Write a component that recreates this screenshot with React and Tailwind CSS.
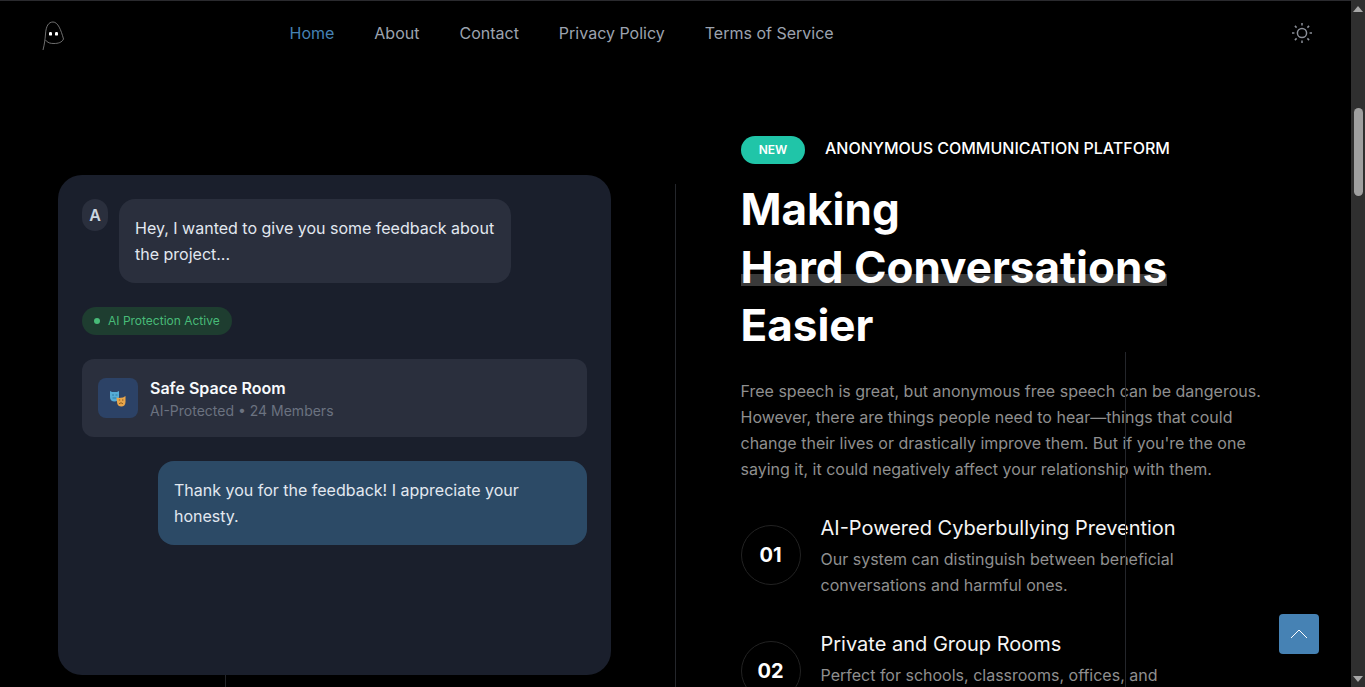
import React from 'react';

const navLinks = ['Home', 'About', 'Contact', 'Privacy Policy', 'Terms of Service'];

const features = [
  { num: '01', title: 'AI-Powered Cyberbullying Prevention', text: ['Our system can distinguish between beneficial', 'conversations and harmful ones.'] },
  { num: '02', title: 'Private and Group Rooms', text: ['Perfect for schools, classrooms, offices, and'] },
];

const GhostLogo = () => (
  <svg width="26" height="32" viewBox="0 0 26 32" fill="none">
    <path d="M2 32 C3.5 26 4 22 4.5 16 C5 8 7.5 4 12 4 C17 4 20 12 22.5 21 C21 24.5 17 25.5 13 25.5 C9.5 25.5 6.5 25 4.5 22" stroke="#8a8a8a" strokeWidth="0.8" />
    <rect x="8" y="14" width="3" height="3.6" rx="1.2" fill="#fff" />
    <rect x="14" y="14" width="3" height="3.6" rx="1.2" fill="#fff" />
  </svg>
);

const SunIcon = () => (
  <svg width="22" height="22" viewBox="0 0 22 22" fill="none" stroke="#8b8f98" strokeWidth="1.5">
    <circle cx="11" cy="11" r="4.6" />
    <path d="M11 1v2.4M11 18.6V21M1 11h2.4M18.6 11H21M3.9 3.9l1.7 1.7M16.4 16.4l1.7 1.7M3.9 18.1l1.7-1.7M16.4 5.6l1.7-1.7" />
  </svg>
);

const MasksIcon = () => (
  <svg width="18" height="18" viewBox="0 0 18 18">
    <path d="M1 2 L3 3 H8 L10 2 V8 C10 11 8 12.5 5.5 12.5 C3 12.5 1 11 1 8 Z" fill="#55acd6" />
    <path d="M3 6h2M6.5 6h2M3.5 9h4" stroke="#2f7fa8" strokeWidth="1" />
    <path d="M7.5 8.5 L9.5 9 L14 8.5 L16.5 7 V13 C16.5 16 14.5 17.5 12.5 17.5 C10 17.5 8 16 8 13 Z" fill="#e9a64a" />
    <path d="M10 15 C11 13.5 13 13.5 14 15" stroke="#8a5a1c" strokeWidth="1" fill="none" />
    <path d="M9.8 11h1.4M13 11h1.4" stroke="#8a5a1c" strokeWidth="1" />
  </svg>
);

export default function App() {
  return (
    <div className="flex h-[687px] overflow-hidden bg-black font-['Inter',sans-serif] text-white">
      <div className="relative flex-1 min-w-0 border-t border-[#2a2a2e]">
        <nav className="flex h-[64px] items-center pl-[41px] pr-[38px]">
          <div className="mr-[222.5px] mt-[2px] w-[26px]"><GhostLogo /></div>
          <div className="flex gap-10 text-base text-[#9ca3af]">
            {navLinks.map((link, i) => (
              <a key={link} className={i === 0 ? 'text-[#4682b4]' : ''}>{link}</a>
            ))}
          </div>
          <div className="ml-auto"><SunIcon /></div>
        </nav>

        <div className="flex">
          <div className="w-[676px] shrink-0 pl-[58px] pt-[110px]">
            <div className="h-[500px] w-[553px] rounded-3xl bg-[#1a1f2c] p-6">
              <div className="flex gap-[11px]">
                <div className="flex h-8 w-[26px] items-center justify-center rounded-full bg-[#2a2f3d] text-base font-semibold text-[#cbd5e0]">A</div>
                <div className="h-[84px] w-[392px] rounded-2xl bg-[#2a2f3d] p-4 leading-[26px] text-[#e2e8f0]">
                  Hey, I wanted to give you some feedback about the project...
                </div>
              </div>
              <div className="mt-6 flex h-7 w-[150px] items-center gap-2 rounded-full bg-[#1e3d30] pl-3 text-xs text-[#48bb78]">
                <span className="h-1.5 w-1.5 rounded-full bg-[#48bb78]" />
                AI Protection Active
              </div>
              <div className="mt-6 flex h-[78px] items-center gap-3 rounded-xl bg-[#2a2f3d] px-4">
                <div className="flex h-10 w-10 items-center justify-center rounded-lg bg-[#2c4266]"><MasksIcon /></div>
                <div>
                  <div className="text-base font-semibold leading-[24px] text-[#f7fafc]">Safe Space Room</div>
                  <div className="mt-px text-sm leading-[20px] text-[#6b7280]">AI-Protected • 24 Members</div>
                </div>
              </div>
              <div className="ml-[76px] mt-6 h-[84px] rounded-2xl bg-[#2c4a66] p-4 leading-[26px] text-[#e2e8f0]">
                Thank you for the feedback! I appreciate your honesty.
              </div>
            </div>
          </div>

          <div className="min-w-0 flex-1 pl-[64.5px] pt-[71px]">
            <div className="flex items-center gap-5 pl-[0.5px]">
              <span className="flex h-7 w-16 items-center justify-center rounded-full bg-[#20c5a8] text-xs font-semibold">NEW</span>
              <span className="-mt-1 text-base font-medium leading-[24px]">ANONYMOUS COMMUNICATION PLATFORM</span>
            </div>
            <h1 className="isolate mt-[16px] text-[44px] font-bold leading-[58px]">
              Making<br />
              <span className="relative">
                Hard Conversations
                <span className="absolute inset-x-0 bottom-[8px] -z-10 h-3 bg-[#3a3a3a] bg-[radial-gradient(#262626_0.6px,transparent_0.7px)] bg-[length:2px_2px]" />
              </span><br />
              Easier
            </h1>
            <p className="mt-[24px] w-[530px] text-base leading-[26px] text-[#8f8f8f]">
              Free speech is great, but anonymous free speech can be dangerous. However, there are things people need to hear—things that could change their lives or drastically improve them. But if you're the one saying it, it could negatively affect your relationship with them.
            </p>
            <div className="mt-[43px] flex flex-col gap-[43px]">
              {features.map((f) => (
                <div key={f.num} className="flex gap-5">
                  <div className="flex h-[60px] w-[60px] shrink-0 items-center justify-center rounded-full border border-[#222] text-[20px] font-bold">{f.num}</div>
                  <div className="-mt-[11px]">
                    <div className="text-[20px] font-normal leading-[28px] text-[#f5f5f5]">{f.title}</div>
                    <div className="mt-[4px] text-base leading-[26px] text-[#8f8f8f]">
                      {f.text.map((line) => <div key={line}>{line}</div>)}
                    </div>
                  </div>
                </div>
              ))}
            </div>
          </div>
        </div>

        {/* decorative rules behind the content */}
        <div className="absolute left-[675px] top-[183px] h-[504px] w-px bg-[#24262b]" />
        <div className="absolute left-[1125px] top-[351px] h-[336px] w-px bg-[#24262b]" />
        <div className="absolute left-[225px] top-[674px] h-[13px] w-px bg-[#24262b]" />

        <button className="absolute left-[1279px] top-[613px] flex h-10 w-10 items-center justify-center rounded-sm bg-[#4682b4]">
          <svg width="18" height="12" viewBox="0 0 18 12" fill="none" stroke="#fff" strokeWidth="1"><path d="M1 10 L9 2 L17 10" /></svg>
        </button>
      </div>

      {/* scrollbar */}
      <aside className="flex w-[14px] shrink-0 flex-col items-center bg-[#2f2f2f] pt-[6px]">
        <div className="h-0 w-0 border-x-[5px] border-b-[6px] border-x-transparent border-b-[#a8a8a8]" />
        <div className="mt-[96px] h-[88px] w-[9px] rounded-full bg-[#9f9f9f]" />
        <div className="mt-auto mb-[5px] h-0 w-0 border-x-[5px] border-t-[6px] border-x-transparent border-t-[#a8a8a8]" />
      </aside>
    </div>
  );
}
